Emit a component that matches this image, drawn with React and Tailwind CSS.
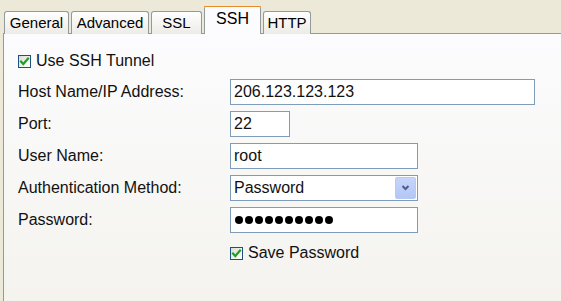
import React from "react";

const font = { fontFamily: '"Liberation Sans", Arial, sans-serif' };

function Check({ className = "" }) {
  return (
    <span className={"flex h-[13px] w-[13px] items-center justify-center border border-[#1c5180] bg-gradient-to-br from-[#dcdcd7] to-white " + className}>
      <svg width="11" height="11" viewBox="0 0 11 11">
        <path d="M2 5.5 L4.3 8 L9 2.5" fill="none" stroke="#21a121" strokeWidth="2.2" strokeLinecap="square" />
      </svg>
    </span>
  );
}

function Tab({ label, w }) {
  return (
    <div
      className={"flex h-[23px] items-center justify-center rounded-t-[3px] border border-b-0 border-[#919b9c] bg-gradient-to-b from-white to-[#ecebe6] pt-px text-[15px] text-black " + w}
    >
      {label}
    </div>
  );
}

export default function App() {
  return (
    <div className="flex h-[301px] w-[561px] flex-col overflow-hidden bg-[#ece9d8]" style={font}>
      <div className="relative z-10 flex h-[34px] items-end gap-[2px] pl-[4px] -mb-px">
        <Tab label="General" w="w-[65px]" />
        <Tab label="Advanced" w="w-[78px]" />
        <Tab label="SSL" w="w-[51px]" />
        <div className="flex h-[28px] w-[57px] flex-col rounded-t-[3px] border-x border-[#919b9c] bg-[#fcfcfe]">
          <div className="h-[3px] rounded-t-[3px] bg-[#f5b040] -mx-px border-t border-[#e68b2c]" />
          <div className="flex flex-1 items-center justify-center pb-[3px] text-[16px] text-black">SSH</div>
        </div>
        <Tab label="HTTP" w="w-[48px]" />
      </div>
      <div className="ml-[3px] flex-1 border-l border-t border-[#919b9c] bg-gradient-to-b from-[#fcfcfe] to-[#f4f3ee] pl-[14px] pt-[19px] text-[16px] text-[#111]">
        <div className="flex h-[16px] items-center gap-[5px]">
          <Check />
          <span>Use SSH Tunnel</span>
        </div>
        <div className="mt-[10px] grid grid-cols-[212px_1fr] gap-y-[6px]">
          <div className="flex h-[26px] items-center">Host Name/IP Address:</div>
          <div className="flex h-[26px] w-[305px] items-center border border-[#7f9db9] bg-white pl-[3px]">206.123.123.123</div>
          <div className="flex h-[26px] items-center">Port:</div>
          <div className="flex h-[26px] w-[60px] items-center border border-[#7f9db9] bg-white pl-[3px]">22</div>
          <div className="flex h-[26px] items-center">User Name:</div>
          <div className="flex h-[26px] w-[188px] items-center border border-[#7f9db9] bg-white pl-[3px]">root</div>
          <div className="flex h-[26px] items-center">Authentication Method:</div>
          <div className="flex h-[26px] w-[188px] items-center border border-[#7f9db9] bg-white pl-[3px] pr-px">
            <span className="flex-1">Password</span>
            <span className="flex h-[22px] w-[21px] items-center justify-center rounded-[2px] border border-[#b9c9f3] bg-gradient-to-b from-[#c6d5fb] to-[#b3c6f7]">
              <svg width="9" height="6" viewBox="0 0 9 6">
                <path d="M1.5 1 L4.5 4 L7.5 1" fill="none" stroke="#4d6185" strokeWidth="2" />
              </svg>
            </span>
          </div>
          <div className="flex h-[26px] items-center">Password:</div>
          <div className="flex h-[26px] w-[188px] items-center gap-[2px] border border-[#7f9db9] bg-white pl-[4px]">
            {Array.from({ length: 10 }).map((_, i) => (
              <span key={i} className="h-[8px] w-[8px] rounded-full bg-black" />
            ))}
          </div>
          <div />
          <div className="mt-[6px] flex h-[16px] items-center gap-[5px]">
            <Check />
            <span>Save Password</span>
          </div>
        </div>
      </div>
    </div>
  );
}
